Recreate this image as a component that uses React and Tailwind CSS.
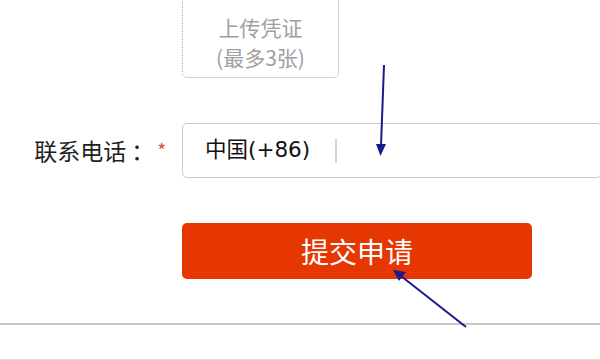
export default function App() {
  return (
    <div
      className="relative w-[600px] h-[360px] overflow-hidden bg-white"
      style={{ fontFamily: '"Microsoft YaHei", "Noto Sans CJK SC", "Liberation Sans", sans-serif' }}
    >
      <div className="flex flex-col pl-[182px] pt-0">
        {/* upload box */}
        <div className="-mt-[4px] w-[157px] h-[82px] pt-[10px] border border-dotted border-[#a8a8a8] rounded-[5px] flex flex-col items-center justify-center text-[21px] leading-[30px] text-[#a0a0a0]">
          <span>上传凭证</span>
          <span>(最多3张)</span>
        </div>
      </div>

      {/* phone row */}
      <div className="flex items-center mt-[45px]">
        <div className="w-[182px] flex items-center justify-end pr-[16px] text-[23px] text-[#222]">
          <span>联系电话</span>
          <span className="ml-[5px]">：</span>
          <span className="text-[#e04a3a] text-[19px] ml-[3px]">*</span>
        </div>
        <div className="flex-1 h-[55px] border border-[#c9c9c9] rounded-[5px] flex items-center pl-[22px] -mr-[2px]">
          <span
            className="text-[21.5px] text-[#111]"
            style={{ fontFamily: '"DejaVu Sans", "Noto Sans CJK SC", sans-serif' }}
          >
            中国(+86)
          </span>
          <span className="ml-[25px] w-[2px] h-[24px] bg-[#d4d4d4]" />
        </div>
      </div>

      {/* submit */}
      <div className="pl-[182px] mt-[45px]">
        <button className="w-[350px] h-[56px] bg-[#e63602] rounded-[5px] text-white text-[28px] flex items-center justify-center">
          提交申请
        </button>
      </div>

      {/* bottom lines */}
      <div className="mt-[44px] h-[2px] bg-[#c8c8c8]" />
      <div className="mt-[34px] h-[2px] bg-[#dedede]" />

      {/* annotation arrows */}
      <svg className="absolute inset-0 pointer-events-none" width="600" height="360">
        <line x1="384" y1="65" x2="381" y2="146" stroke="#1a1a8c" strokeWidth="2" />
        <polygon points="376,144 386,144 380.5,156" fill="#1a1a8c" />
        <line x1="466" y1="327" x2="401" y2="276" stroke="#1a1a8c" strokeWidth="2" />
        <polygon points="393,270 406,272 399,281" fill="#1a1a8c" />
      </svg>
    </div>
  );
}
